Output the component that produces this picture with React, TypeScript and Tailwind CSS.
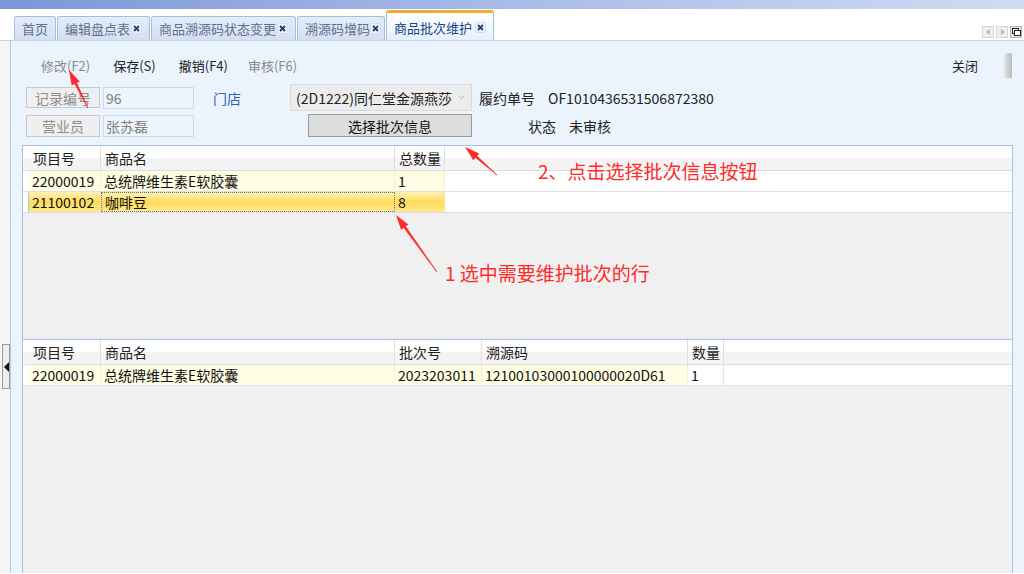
import React from 'react';

const font = "font-['Noto_Sans_CJK_SC','Noto_Sans',sans-serif]";

const tabs = [
  { title: '首页', w: 'w-[42px]', close: false },
  { title: '编辑盘点表', w: 'w-[93px]', close: true },
  { title: '商品溯源码状态变更', w: 'w-[145px]', close: true },
  { title: '溯源码增码', w: 'w-[88px]', close: true },
];

const topCols = [
  { title: '项目号', w: 'w-[72px]' },
  { title: '商品名', w: 'w-[294px]' },
  { title: '总数量', w: 'w-[50px]' },
];

const topRows = [
  ['22000019', '总统牌维生素E软胶囊', '1'],
  ['21100102', '咖啡豆', '8'],
];

const bottomCols = [
  { title: '项目号', w: 'w-[72px]' },
  { title: '商品名', w: 'w-[294px]' },
  { title: '批次号', w: 'w-[87px]' },
  { title: '溯源码', w: 'w-[206px]' },
  { title: '数量', w: 'w-[36px]' },
];

const bottomRows = [['22000019', '总统牌维生素E软胶囊', '2023203011', '12100103000100000020D61', '1']];

function CloseIcon() {
  return (
    <span className="flex h-[11px] w-[11px] shrink-0 items-center justify-center rounded-[2px] border border-[#d3dded] bg-[#eef3fa]">
      <svg width="7" height="7" viewBox="0 0 7 7">
        <path d="M1 1L6 6M6 1L1 6" stroke="#1d3f7a" strokeWidth="1.8" />
      </svg>
    </span>
  );
}

function Arrow({ x1, y1, x2, y2 }: { x1: number; y1: number; x2: number; y2: number }) {
  const dx = x2 - x1;
  const dy = y2 - y1;
  const len = Math.hypot(dx, dy);
  const ux = dx / len;
  const uy = dy / len;
  const px = -uy;
  const py = ux;
  const hl = 15;
  const hw = 4.5;
  const bx = x2 - ux * hl;
  const by = y2 - uy * hl;
  const head = `${x2},${y2} ${bx + px * hw},${by + py * hw} ${bx - px * hw},${by - py * hw}`;
  const shaft = `${x1 + px * 0.4},${y1 + py * 0.4} ${bx + ux * 2 + px * 1.4},${by + uy * 2 + py * 1.4} ${bx + ux * 2 - px * 1.4},${by + uy * 2 - py * 1.4} ${x1 - px * 0.4},${y1 - py * 0.4}`;
  return (
    <g fill="#ff2b2b">
      <polygon points={shaft} />
      <polygon points={head} />
    </g>
  );
}

function GridHeader({ cols }: { cols: { title: string; w: string }[] }) {
  return (
    <div className="flex h-[25px] shrink-0 border-b border-[#dcdcdc] bg-gradient-to-b from-white from-50% to-[#f4f4f4] to-50%">
      <div className="w-[6px] shrink-0" />
      {cols.map(c => (
        <div key={c.title} className={`${c.w} flex shrink-0 items-center whitespace-nowrap border-r border-[#dedede] px-[4px] text-[14px] leading-none text-[#222]`}>
          {c.title}
        </div>
      ))}
    </div>
  );
}

export default function App() {
  return (
    <div className={`relative h-[574px] w-[1024px] overflow-hidden bg-white ${font}`}>
      {/* window title gradient */}
      <div className="h-[9px] bg-gradient-to-r from-[#7b96d8] via-[#aabbe9] to-[#cfdcf3]" />

      {/* tab strip */}
      <div className="flex h-[32px] items-end justify-between border-b border-[#c3d3ea] pl-[14px]">
        <div className="flex items-end gap-[1px]">
          {tabs.map(t => (
            <div
              key={t.title}
              className={`${t.w} flex h-[24px] shrink-0 items-center justify-between whitespace-nowrap rounded-t-[3px] border border-b-0 border-[#a5bde0] bg-gradient-to-b from-[#e6edf8] to-[#d3dff0] px-[7px] text-[13px] leading-none text-[#5d7090]`}
            >
              <span>{t.title}</span>
              {t.close && <CloseIcon />}
            </div>
          ))}
          <div className="flex h-[30px] w-[108px] shrink-0 items-center justify-between whitespace-nowrap rounded-t-[3px] border border-b-0 border-t-[3px] border-[#a5bde0] border-t-[#f3ab2e] bg-gradient-to-b from-white to-[#e6f0fb] px-[7px] pt-[2px] text-[13px] leading-none text-[#15428b]">
            <span>商品批次维护</span>
            <CloseIcon />
          </div>
        </div>
        <div className="mb-[2px] mr-[2px] flex gap-[2px]">
          <div className="flex h-[12px] w-[12px] items-center justify-center border border-[#d6d6d6] bg-[#eeeeee]">
            <svg width="5" height="6" viewBox="0 0 5 6"><path d="M4 0L0 3L4 6Z" fill="#b8b8b8" /></svg>
          </div>
          <div className="flex h-[12px] w-[12px] items-center justify-center border border-[#d6d6d6] bg-[#eeeeee]">
            <svg width="5" height="6" viewBox="0 0 5 6"><path d="M1 0L5 3L1 6Z" fill="#b8b8b8" /></svg>
          </div>
          <div className="flex h-[12px] w-[12px] items-center justify-center border border-[#9fb4d6] bg-[#fbecb8]">
            <svg width="9" height="8" viewBox="0 0 9 8">
              <rect x="0.5" y="0.5" width="6" height="5" fill="none" stroke="#222" />
              <rect x="2.5" y="2.5" width="6" height="5" fill="#fff" stroke="#222" />
            </svg>
          </div>
        </div>
      </div>

      <div className="flex h-[532px]">
        {/* left collapse strip */}
        <div className="flex w-[11px] shrink-0 flex-col border-r border-[#c4c4c4] bg-[#f5f5f5] pl-[2px] pt-[303px]">
          <div className="flex h-[45px] w-[8px] items-center justify-center border border-[#9a9a9a] bg-[#eeeeee]">
            <svg width="5" height="10" viewBox="0 0 5 10"><path d="M5 0L0 5L5 10Z" fill="#111" /></svg>
          </div>
        </div>

        {/* content */}
        <div className="flex flex-1 flex-col bg-[#ebf3fd]">
          {/* toolbar */}
          <div className="flex h-[43px] shrink-0 items-center justify-between pl-[30px] pr-[12px] pt-[6px] text-[13px] leading-none">
            <div className="flex items-center whitespace-nowrap">
              <span className="text-[#8a8a8a]">修改(F2)</span>
              <span className="ml-[23px] text-[#222]">保存(S)</span>
              <span className="ml-[23px] text-[#222]">撤销(F4)</span>
              <span className="ml-[20px] text-[#8a8a8a]">审核(F6)</span>
            </div>
            <div className="flex items-center">
              <span className="text-[#222]">关闭</span>
              <div className="ml-[26px] h-[25px] w-[8px] rounded-[1px] bg-gradient-to-r from-[#e8e8e8] via-[#d0d0d0] to-[#bdbdbd]" />
            </div>
          </div>

          {/* form row 1 */}
          <div className="flex h-[27px] shrink-0 items-center whitespace-nowrap pl-[15px] text-[14px] leading-none">
            <div className="flex h-[21px] w-[74px] items-center justify-center border border-[#c9c9c9] bg-[#efefef] text-[#8d8d8d]">记录编号</div>
            <div className="ml-[3px] flex h-[22px] w-[91px] items-center border border-[#c8daef] bg-[#eef5fd] pl-[2px] text-[#7d7d7d]">96</div>
            <span className="ml-[19px] text-[#2a63b8]">门店</span>
            <div className="ml-[49px] flex h-[27px] w-[182px] items-center justify-between border border-[#dadada] bg-[#ececec] pl-[5px] pr-[6px] text-[#222]">
              <span>(2D1222)同仁堂金源燕莎</span>
              <svg width="7" height="5" viewBox="0 0 7 5"><path d="M1 1L3.5 3.5L6 1" stroke="#b5b5b5" fill="none" /></svg>
            </div>
            <span className="ml-[7px] text-[#222]">履约单号</span>
            <span className="ml-[13px] text-[#222]">OF1010436531506872380</span>
          </div>

          {/* form row 2 */}
          <div className="mt-[3px] flex h-[23px] shrink-0 items-center whitespace-nowrap pl-[15px] text-[14px] leading-none">
            <div className="flex h-[22px] w-[74px] items-center justify-center border border-[#c9c9c9] bg-[#efefef] text-[#8d8d8d]">营业员</div>
            <div className="ml-[3px] flex h-[22px] w-[91px] items-center border border-[#c8daef] bg-[#eef5fd] pl-[2px] text-[#7d7d7d]">张苏磊</div>
            <div className="ml-[114px] flex h-[23px] w-[164px] items-center justify-center border border-[#9b9b9b] bg-[#dddddd] text-[#111]">选择批次信息</div>
            <span className="ml-[56px] text-[#222]">状态</span>
            <span className="ml-[13px] text-[#222]">未审核</span>
          </div>

          {/* top grid */}
          <div className="ml-[11px] mr-[11px] mt-[8px] flex h-[194px] shrink-0 flex-col border border-b-0 border-[#a8c1e3] bg-[#f0f0f0] text-[14px] leading-none">
            <GridHeader cols={topCols} />
            {topRows.map((r, i) => {
              const sel = i === 1;
              return (
                <div key={r[0]} className="flex h-[21px] shrink-0 border-b border-[#e0e0e0] bg-white">
                  <div className={`w-[6px] shrink-0 ${sel ? 'border-r border-[#a9c6ea]' : ''}`} />
                  {r.map((cell, j) => (
                    <div
                      key={j}
                      className={`${topCols[j].w} flex shrink-0 items-center whitespace-nowrap pl-[3px] text-[#111] ${
                        sel
                          ? 'bg-gradient-to-b from-[#fff2b8] via-[#ffdb55] to-[#ffe88f]'
                          : 'bg-[#fffee3]'
                      } ${
                        sel && j === 1
                          ? 'border border-dotted border-[#6f6f6f]'
                          : sel
                            ? 'border-r border-[#f3e6b0]'
                            : 'border-r border-[#f2f0dc]'
                      }`}
                    >
                      {cell}
                    </div>
                  ))}
                </div>
              );
            })}
          </div>

          {/* bottom grid */}
          <div className="ml-[11px] mr-[11px] flex flex-1 flex-col border border-b-0 border-[#a8c1e3] bg-[#f0f0f0] text-[14px] leading-none">
            <GridHeader cols={bottomCols} />
            {bottomRows.map(r => (
              <div key={r[0]} className="flex h-[21px] shrink-0 border-b border-[#e0e0e0] bg-white">
                <div className="w-[6px] shrink-0" />
                {r.map((cell, j) => (
                  <div
                    key={j}
                    className={`${bottomCols[j].w} flex shrink-0 items-center whitespace-nowrap border-r pl-[3px] text-[#111] ${
                      j < 4 ? 'border-[#f2f0dc] bg-[#fffee3]' : 'border-[#e4e4e4] bg-white'
                    }`}
                  >
                    {cell}
                  </div>
                ))}
              </div>
            ))}
          </div>
        </div>
      </div>

      {/* annotations */}
      <svg className="pointer-events-none absolute left-0 top-0" width="1024" height="574" viewBox="0 0 1024 574">
        <Arrow x1={88} y1={108} x2={69} y2={70} />
        <Arrow x1={497} y1={175} x2={465} y2={147} />
        <Arrow x1={437} y1={272} x2={396} y2={215} />
      </svg>
      <div className="pointer-events-none absolute left-[538px] top-[161px] whitespace-nowrap text-[19px] leading-none text-[#ff2b2b]">2、点击选择批次信息按钮</div>
      <div className="pointer-events-none absolute left-[445px] top-[263px] whitespace-nowrap text-[19px] leading-none text-[#ff2b2b]">1 选中需要维护批次的行</div>
    </div>
  );
}
